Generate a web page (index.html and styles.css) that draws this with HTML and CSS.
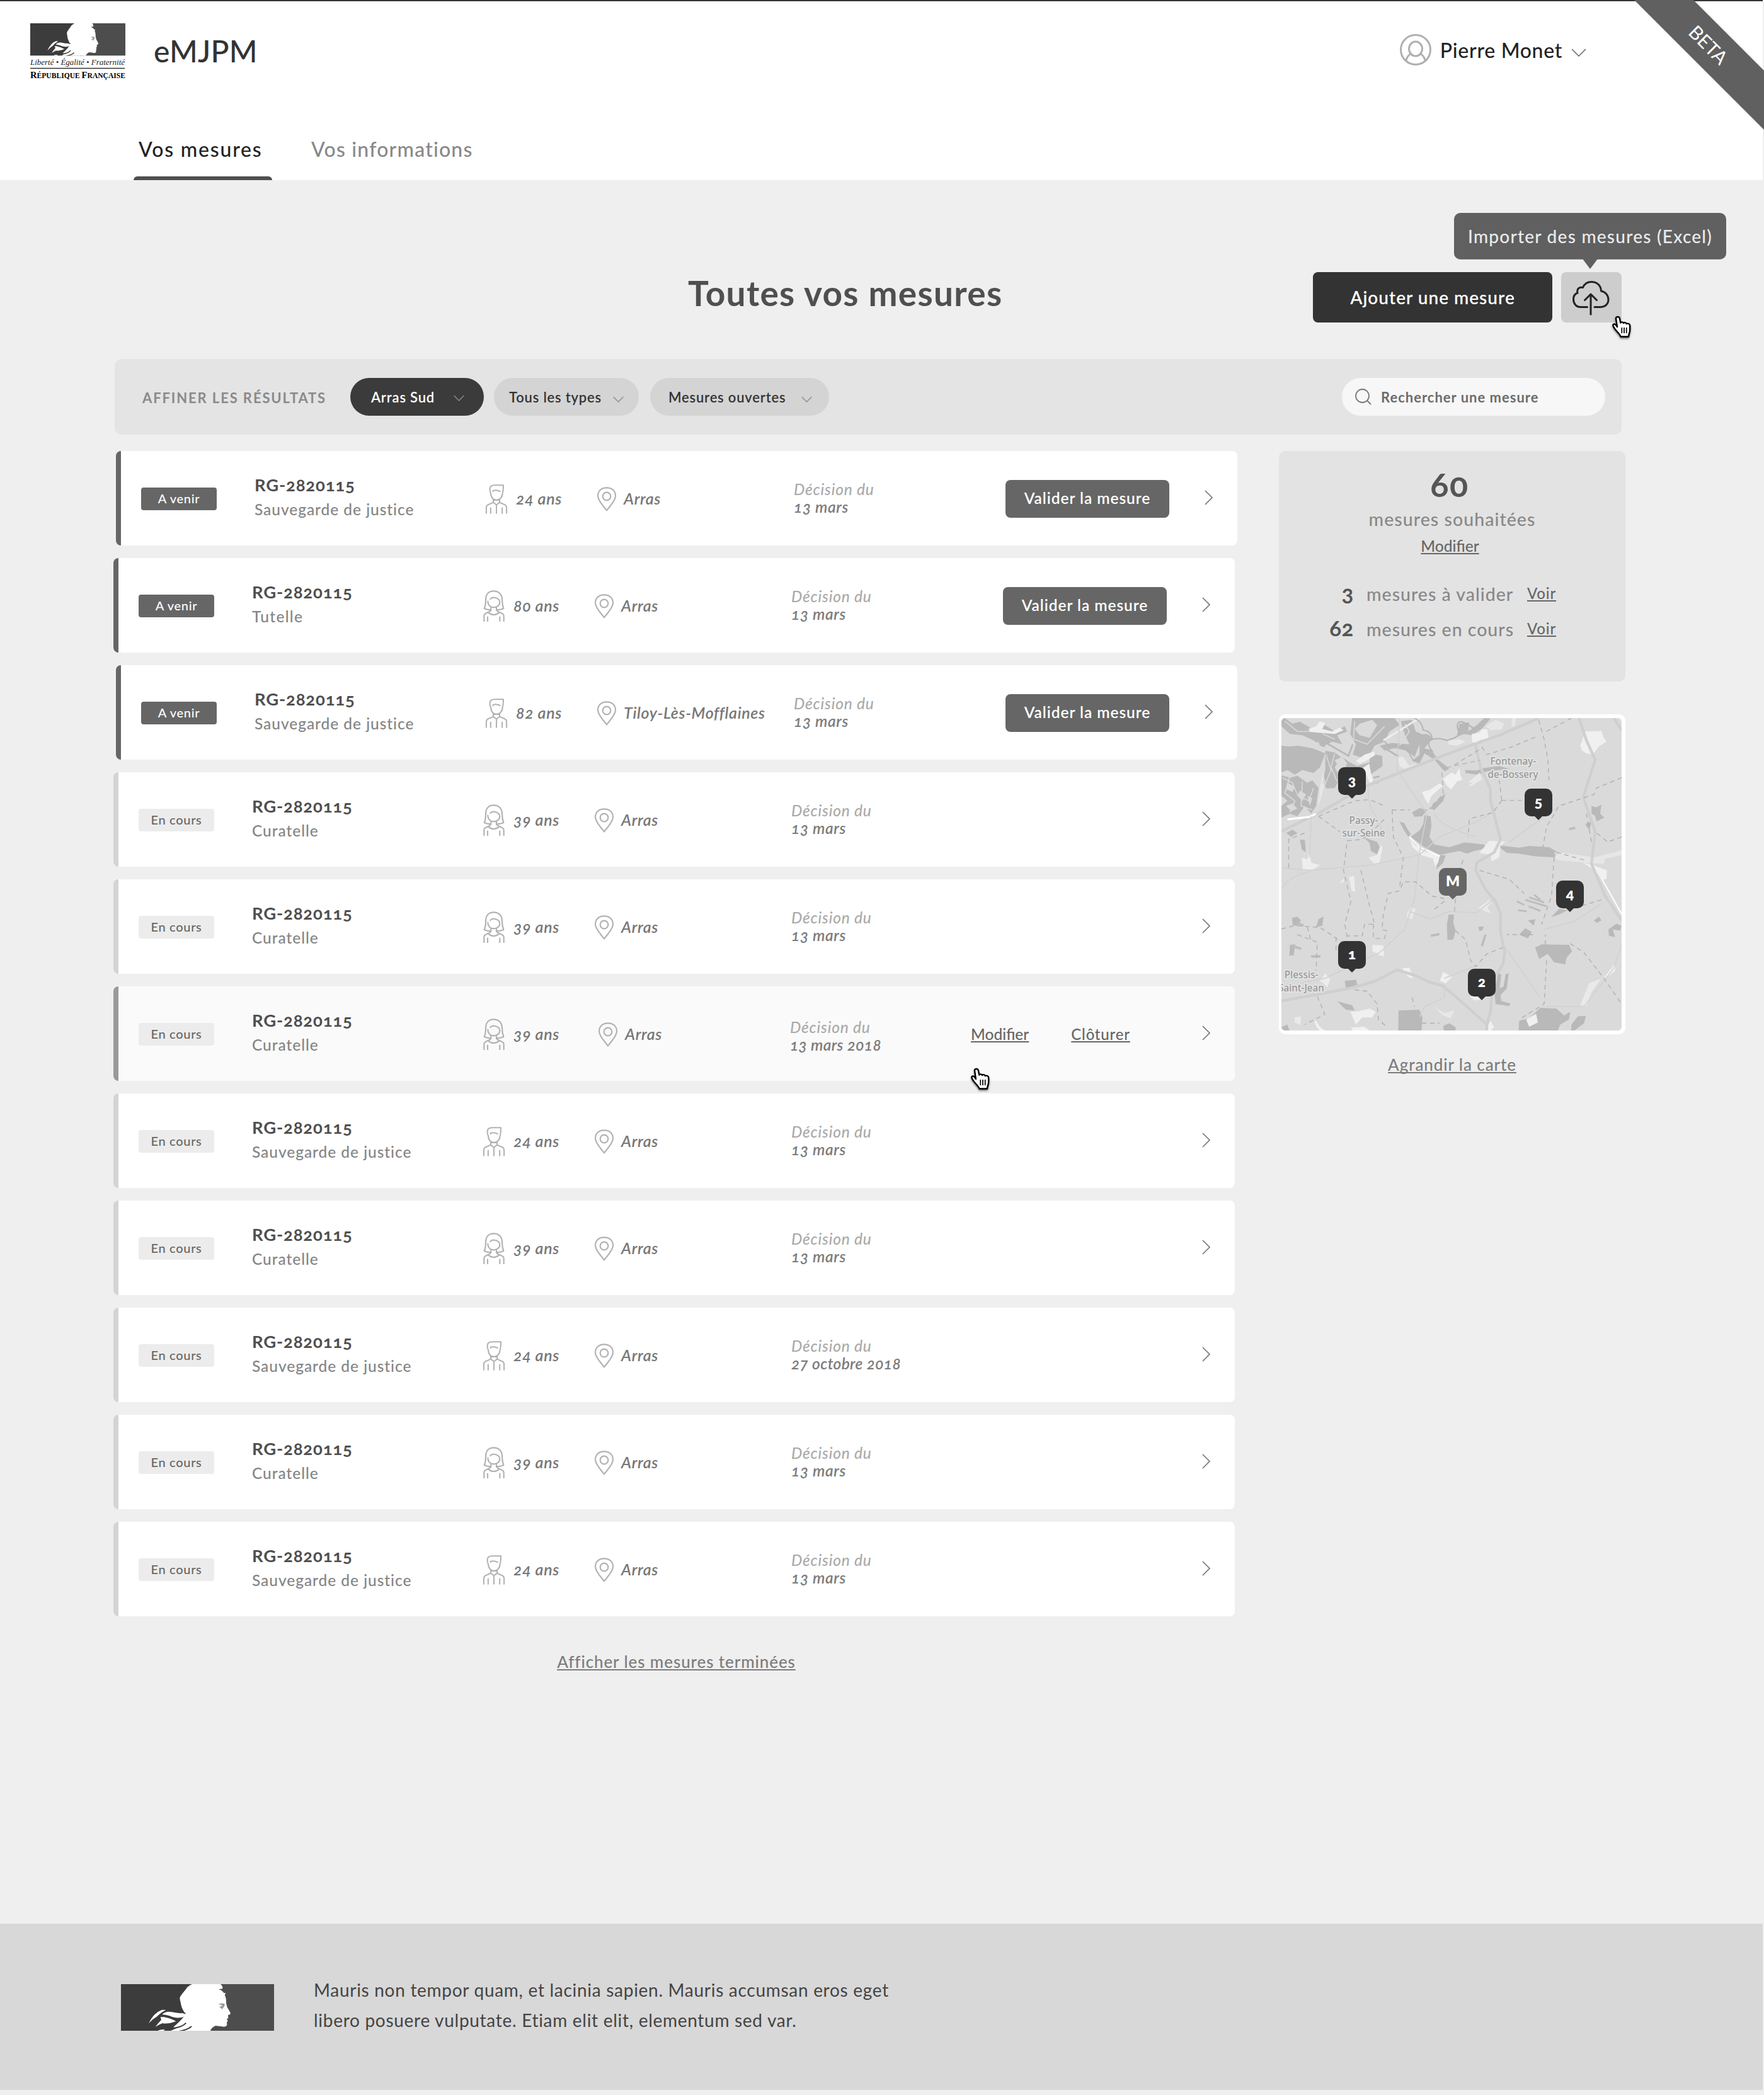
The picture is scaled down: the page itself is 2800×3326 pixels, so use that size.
FILE: index.html
```html
<!DOCTYPE html>
<html lang="fr">
<head>
<meta charset="utf-8">
<title>eMJPM</title>
<link rel="stylesheet" href="styles.css">
</head>
<body>
<svg class="defs" width="0" height="0">
  <symbol id="man" viewBox="87 81 114 150"><path d="M179 87H136Q111 87 111 106C110 116 113 124 116 130C116 150 130 162 144 162S174 150 174 130C178 118 179 105 179 87ZM127 119V115Q143 109 162 118M128 160V174L110 182Q93 187 93 200V228M160 160V174L178 182Q195 187 195 200V228M128 174L144 186L160 174M144 186V228M115 202V228M173 202V228"/></symbol>
  <symbol id="woman" viewBox="80 590 104 150"><path d="M118 684Q100 684 86 677C92 665 93 655 93 636C93 610 107 594 131 594S171 610 171 636C171 655 173 665 178 677Q164 684 144 684M115 632Q122 622 138 626C152 629 160 638 160 648C160 662 146 672 131 672C114 672 103 660 103 643M118 671V685Q112 694 100 697Q85 702 85 712V737M144 671V685Q150 694 162 697Q179 702 179 712V737M105 696Q131 718 157 696M102 718V737M160 718V737"/></symbol>
  <symbol id="pin" viewBox="621 101 96 117"><path d="M669 105C642 105 627 122 627 144C627 168 655 193 669 213C683 193 711 168 711 144C711 122 696 105 669 105Z"/><circle cx="669" cy="146" r="19"/></symbol>
  <symbol id="next" viewBox="0 0 14 24"><path d="M1 1L12 12L1 23"/></symbol>
  <symbol id="down" viewBox="0 0 24 13"><path d="M1 1L12 12L23 1"/></symbol>
  <symbol id="hand" viewBox="0 0 34 38"><path d="M9.500 2C11.500 1.600 12.600 3 13 5L14.300 11.500C15.500 9.800 18.200 10 19 12C20.500 10.500 23 11 23.600 13C25.800 12 29.200 13 29.200 16V23C29 27 27.500 28.500 27 33.500H14.500C13 28.500 7.500 25 4.500 20C2.500 17 1.500 14.500 3.300 13.600C5.300 13 7.500 15 9 18L7 5C6.700 3.300 7.800 2.300 9.500 2Z" fill="#fff" stroke="#000" stroke-width="2.400" stroke-linejoin="round"/><path d="M16.300 19V28M20 19V28M23.700 19V28" stroke="#000" stroke-width="1.700"/></symbol>
  <symbol id="marianne" viewBox="18 18 729 222" preserveAspectRatio="none">
    <path d="M18 18H420V240H18Z" fill="#3c3c3c"/><path d="M400 18H747V240H400Z" fill="#4d4d4d"/>
    <g fill="#fff">
      <path d="M357 18H492Q506 30 501 40L482 43Q500 47 508 60L517 61L512 69Q520 85 519 108L524 128Q532 140 540 156L537 163L528 165L529 181L521 185L527 192L522 200L523 214Q515 224 500 220L468 216Q448 225 444 240H255Q275 232 290 224Q272 226 268 222Q300 196 318 172L322 156Q303 125 302 104Q296 86 300 78Q304 70 325 45Q334 28 357 18Z"/>
      <path d="M150 205Q175 152 215 140L232 141Q205 155 190 172Q166 186 150 205Z"/>
      <path d="M214 163Q230 145 260 151Q300 160 326 154V170Q295 184 262 174Q236 163 214 163Z"/>
      <path d="M206 173Q212 176 220 174Q255 180 280 195Q240 210 215 204Q196 213 182 221Q198 200 210 188Z"/>
      <path d="M193 240Q205 233 228 234L220 240Z"/>
    </g>
    <path d="M272 227Q310 222 328 203M296 242Q335 236 354 219M303 150L325 158" fill="none" stroke="#3c3c3c" stroke-width="6"/>
    <path d="M480 114Q496 106 512 112L511 122L500 137L486 126L500 122Q498 114 480 114Z" fill="#9a9a9a"/>
  </symbol>
</svg>

<header class="header">
  <div class="header-top">
    <svg class="logo" width="152" height="96" viewBox="0 0 152 96">
      <use href="#marianne" width="151" height="51.500"/>
      <text class="motto" x="0" y="65.500" textLength="150" lengthAdjust="spacingAndGlyphs">Liberté • Égalité • Fraternité</text>
      <path d="M0 71.500H150" stroke="#333" stroke-width="1.300"/>
      <text class="republic" x="0" y="87" textLength="151" lengthAdjust="spacingAndGlyphs"><tspan class="cap">R</tspan>ÉPUBLIQUE <tspan class="cap">F</tspan>RANÇAISE</text>
    </svg>
    <div class="brand">eMJPM</div>
    <div class="user">
      <svg class="avatar" viewBox="0 0 50 50"><circle cx="25" cy="25" r="23.500"/><ellipse cx="25" cy="23.500" rx="10.500" ry="11.500"/><path d="M10 42C11 37 13 34 17 31.500M40 42C39 37 37 34 33 31.500"/></svg>
      <span class="user-name">Pierre Monet</span>
      <svg class="chevron chevron-user"><use href="#down"/></svg>
    </div>
  </div>
  <nav class="tabs">
    <a class="tab tab-active">Vos mesures</a>
    <a class="tab">Vos informations</a>
  </nav>
</header>
<svg class="ribbon" viewBox="0 0 206 206"><path d="M0 0H94L206 112V206Z" fill="#606060"/><text x="110" y="79" transform="rotate(45 110 79)" text-anchor="middle">BETA</text></svg>

<main class="main">
  <div class="title-row">
    <h1 class="title">Toutes vos mesures</h1>
    <div class="buttons">
      <button class="add">Ajouter une mesure</button>
      <div class="import">
        <svg width="96" height="80" viewBox="0 0 96 80"><path d="M41.500 55.500H31C23 55.500 19.500 49 19.500 43C19.500 38 22 34.500 26 33C24.500 27 28 23.500 34.500 24.500C37 18.500 42 15.500 48 15.500C57 15.500 63 21 63.500 30C70.500 31.500 75 37 75 43.500C75 50.500 70 55.500 62 55.500H53M47 67V35.500M37.500 44.500L47 35L56.500 44.500"/></svg>
        <div class="tooltip">Importer des mesures (Excel)</div>
        <svg class="cursor cursor-import"><use href="#hand"/></svg>
      </div>
    </div>
  </div>

  <div class="filters">
    <span class="filters-label">AFFINER LES RÉSULTATS</span>
    <div class="pill pill-dark">Arras Sud<svg class="chevron"><use href="#down"/></svg></div>
    <div class="pill pill-types">Tous les types<svg class="chevron"><use href="#down"/></svg></div>
    <div class="pill pill-open">Mesures ouvertes<svg class="chevron"><use href="#down"/></svg></div>
    <div class="search"><svg class="search-icon" viewBox="0 0 26 26"><circle cx="11.500" cy="11.500" r="10.500"/><path d="M19 19L25 25"/></svg>Rechercher une mesure</div>
  </div>

  <div class="content">
    <section class="list">
      <article class="row row-new">
        <span class="badge">A venir</span>
        <div class="ref"><b>RG-2820115</b><span>Sauvegarde de justice</span></div>
        <svg class="icon person"><use href="#man"/></svg><em class="fact">24 ans</em>
        <svg class="icon place"><use href="#pin"/></svg><em class="fact">Arras</em>
        <em class="date">Décision du<b>13 mars</b></em>
        <div class="action"><button class="validate">Valider la mesure</button></div>
        <svg class="next"><use href="#next"/></svg>
      </article>
      <article class="row row-new row-even">
        <span class="badge">A venir</span>
        <div class="ref"><b>RG-2820115</b><span class="short">Tutelle</span></div>
        <svg class="icon person"><use href="#woman"/></svg><em class="fact">80 ans</em>
        <svg class="icon place"><use href="#pin"/></svg><em class="fact">Arras</em>
        <em class="date">Décision du<b>13 mars</b></em>
        <div class="action"><button class="validate">Valider la mesure</button></div>
        <svg class="next"><use href="#next"/></svg>
      </article>
      <article class="row row-new">
        <span class="badge">A venir</span>
        <div class="ref"><b>RG-2820115</b><span>Sauvegarde de justice</span></div>
        <svg class="icon person"><use href="#man"/></svg><em class="fact">82 ans</em>
        <svg class="icon place"><use href="#pin"/></svg><em class="fact">Tiloy-Lès-Mofflaines</em>
        <em class="date">Décision du<b>13 mars</b></em>
        <div class="action"><button class="validate">Valider la mesure</button></div>
        <svg class="next"><use href="#next"/></svg>
      </article>
      <article class="row">
        <span class="badge">En cours</span>
        <div class="ref"><b>RG-2820115</b><span>Curatelle</span></div>
        <svg class="icon person"><use href="#woman"/></svg><em class="fact">39 ans</em>
        <svg class="icon place"><use href="#pin"/></svg><em class="fact">Arras</em>
        <em class="date">Décision du<b>13 mars</b></em>
        <div class="action"></div>
        <svg class="next"><use href="#next"/></svg>
      </article>
      <article class="row">
        <span class="badge">En cours</span>
        <div class="ref"><b>RG-2820115</b><span>Curatelle</span></div>
        <svg class="icon person"><use href="#woman"/></svg><em class="fact">39 ans</em>
        <svg class="icon place"><use href="#pin"/></svg><em class="fact">Arras</em>
        <em class="date">Décision du<b>13 mars</b></em>
        <div class="action"></div>
        <svg class="next"><use href="#next"/></svg>
      </article>
      <article class="row row-hover">
        <span class="badge">En cours</span>
        <div class="ref"><b>RG-2820115</b><span>Curatelle</span></div>
        <svg class="icon person"><use href="#woman"/></svg><em class="fact">39 ans</em>
        <svg class="icon place"><use href="#pin"/></svg><em class="fact">Arras</em>
        <em class="date">Décision du<b class="long">13 mars 2018</b></em>
        <div class="action"><a class="link edit">Modifier</a><a class="link">Clôturer</a></div>
        <svg class="next"><use href="#next"/></svg>
        <svg class="cursor cursor-row"><use href="#hand"/></svg>
      </article>
      <article class="row">
        <span class="badge">En cours</span>
        <div class="ref"><b>RG-2820115</b><span>Sauvegarde de justice</span></div>
        <svg class="icon person"><use href="#man"/></svg><em class="fact">24 ans</em>
        <svg class="icon place"><use href="#pin"/></svg><em class="fact">Arras</em>
        <em class="date">Décision du<b>13 mars</b></em>
        <div class="action"></div>
        <svg class="next"><use href="#next"/></svg>
      </article>
      <article class="row">
        <span class="badge">En cours</span>
        <div class="ref"><b>RG-2820115</b><span>Curatelle</span></div>
        <svg class="icon person"><use href="#woman"/></svg><em class="fact">39 ans</em>
        <svg class="icon place"><use href="#pin"/></svg><em class="fact">Arras</em>
        <em class="date">Décision du<b>13 mars</b></em>
        <div class="action"></div>
        <svg class="next"><use href="#next"/></svg>
      </article>
      <article class="row">
        <span class="badge">En cours</span>
        <div class="ref"><b>RG-2820115</b><span>Sauvegarde de justice</span></div>
        <svg class="icon person"><use href="#man"/></svg><em class="fact">24 ans</em>
        <svg class="icon place"><use href="#pin"/></svg><em class="fact">Arras</em>
        <em class="date">Décision du<b class="long">27 octobre 2018</b></em>
        <div class="action"></div>
        <svg class="next"><use href="#next"/></svg>
      </article>
      <article class="row">
        <span class="badge">En cours</span>
        <div class="ref"><b>RG-2820115</b><span>Curatelle</span></div>
        <svg class="icon person"><use href="#woman"/></svg><em class="fact">39 ans</em>
        <svg class="icon place"><use href="#pin"/></svg><em class="fact">Arras</em>
        <em class="date">Décision du<b>13 mars</b></em>
        <div class="action"></div>
        <svg class="next"><use href="#next"/></svg>
      </article>
      <article class="row">
        <span class="badge">En cours</span>
        <div class="ref"><b>RG-2820115</b><span>Sauvegarde de justice</span></div>
        <svg class="icon person"><use href="#man"/></svg><em class="fact">24 ans</em>
        <svg class="icon place"><use href="#pin"/></svg><em class="fact">Arras</em>
        <em class="date">Décision du<b>13 mars</b></em>
        <div class="action"></div>
        <svg class="next"><use href="#next"/></svg>
      </article>
      <a class="more more-list">Afficher les mesures terminées</a>
    </section>

    <aside class="side">
      <div class="stats">
        <b class="total">60</b>
        <span class="total-label">mesures souhaitées</span>
        <a class="link edit total-edit">Modifier</a>
        <div class="stat"><b>3</b><span>mesures à valider</span><a class="link">Voir</a></div>
        <div class="stat"><b>62</b><span>mesures en cours</span><a class="link">Voir</a></div>
      </div>
      <div class="map">
        <svg class="map-art" viewBox="86 98 1365 1215" preserveAspectRatio="none">
          <rect x="86" y="98" width="1365" height="1215" fill="#dadada"/>
          <g fill="#b9b9b9">
            <path d="M86 205Q120 212 150 205L210 215L262 235L240 290L215 312L170 300L140 318L110 300L86 310Z"/>
            <path d="M262 225L300 232L325 250L300 290L322 330L300 370L268 372L250 350L262 300Z"/>
            <path d="M330 250L360 270L390 285L440 270L440 235L490 245L492 285L440 320L420 290L370 300L330 280Z"/>
            <path d="M370 98H540L560 125L520 150L500 190L460 205L440 240L400 250L372 240L385 200L362 160Z"/>
            <path d="M86 98H100L130 120L160 112L210 140L260 125L300 150L340 130L350 150L310 165L330 200L290 190L250 210L215 185L170 165L120 160L86 130Z"/>
            <path d="M86 320L120 330L150 322L190 350L210 340L235 370L225 440L205 470L180 440L150 480L120 470L86 485V440L110 420L86 400Z"/>
            <path d="M565 110L610 105L625 150L660 165L690 180L640 200L620 250L590 225L540 215L500 225L480 205L530 195L600 200L580 160Z"/>
            <path d="M640 165Q680 150 690 180L660 215L690 225L715 260L760 295L740 305L700 260L660 235L640 275L610 265L640 240Z"/>
            <path d="M790 170L800 120L840 115L835 150L870 125L900 98L925 100L890 140L850 165L820 160Z"/>
            <path d="M823 300L870 302L900 292L960 285L1000 295L960 300L910 305L870 318L825 312Z"/>
            <path d="M660 475L685 480L688 520L680 560L700 590L760 600L820 582L900 590L905 605L860 615L830 625L800 615L720 630L660 600L605 560L640 535L655 510Z"/>
            <path d="M560 502L578 505L592 530L605 550L595 560L575 530Z"/><path d="M610 465L640 448L672 455L650 480L620 482Z"/>
            <path d="M680 450L720 410L745 390L735 420L700 455Z"/>
            <path d="M950 592L1040 602L1080 595L1160 600L1200 622L1180 640L1100 635L1040 625L990 622Z"/>
            <path d="M722 630L745 632L735 660L708 686L712 660Z"/><path d="M418 562L470 580L480 600L470 628L445 615L440 585Z"/>
            <path d="M160 570L180 572L184 620L168 610Z"/><path d="M105 545L130 532L150 545L125 560Z"/>
            <path d="M757 862H778L776 895L785 925L775 960H752L750 900Z"/>
            <path d="M128 875L150 870L165 885L150 905H132Z"/><path d="M235 880L255 870L250 905L225 912Z"/><path d="M120 980L142 978L135 1020L118 1022Z"/>
            <path d="M1104 990L1130 978L1240 980L1252 1005L1230 1030L1225 1056L1180 1048L1155 1015L1120 1035Z"/>
            <path d="M1168 872L1200 840L1235 845L1200 862Z"/><path d="M1330 440L1350 445L1370 435L1365 470L1382 485L1350 500L1345 478L1330 470Z"/><path d="M1305 510L1330 500L1322 535Z"/>
            <path d="M1040 940L1065 915L1090 930L1075 955Z"/><path d="M1075 885L1105 880L1098 905Z"/><path d="M1398 920L1430 898L1450 905L1445 925L1415 920L1425 950L1400 945Z"/><path d="M1340 885L1360 870L1370 885L1352 895Z"/>
            <path d="M876 910L898 908L892 925H880Z"/><path d="M955 1090L968 1095L962 1150L978 1140L985 1095L998 1090L990 1150L965 1175L968 1198L1005 1208L1000 1218L945 1210L940 1160Z"/>
            <path d="M556 1235L640 1232L652 1262L648 1313H555Z"/><path d="M735 1295L760 1285L785 1300V1313H738Z"/>
            <path d="M1040 1275L1080 1265L1125 1225L1190 1228L1220 1255L1245 1240L1240 1270L1205 1290L1195 1313H1038Z"/><path d="M1250 1290L1275 1258L1308 1256L1300 1285L1262 1313H1248Z"/>
            <path d="M340 1120L385 1115L390 1135L345 1150Z"/><path d="M310 1200L370 1215L380 1235L345 1232Z"/><path d="M86 1300L110 1290L118 1313H86Z"/>
          </g>
          <path d="M1030 810L1060 825M1035 845L1070 850M1065 805L1150 830M1080 795L1140 815M1100 785L1125 805M1078 830L1125 848" fill="none" stroke="#bdbdbd" stroke-width="7"/>
          <path d="M205 1025H243M150 895L175 905M130 985L165 995M905 940L890 985M1240 530L1265 525M685 945L720 938" fill="none" stroke="#bcbcbc" stroke-width="9"/>
          <g fill="#dadada"><path d="M400 120L450 105L470 125L440 175L400 165L380 140Z"/><path d="M180 180L210 195L240 190L235 215L200 205Z"/><path d="M110 350L140 365L130 385L105 375ZM160 380L185 395L170 420L150 400ZM105 440L130 430L150 450L125 460ZM190 400L210 410L200 440Z"/><path d="M300 262L330 248L350 275L340 290L315 285Z"/></g>
          <path d="M90 330L130 350L150 395L195 420L215 370M120 325L100 390L140 420L120 465M170 345L165 440L210 455M265 240L285 300L260 360M300 235L285 290L310 345M100 110L150 150L230 150L300 180M380 110L375 180L430 200L500 130M580 120L600 150L560 205" fill="none" stroke="#dadada" stroke-width="4"/>
          <path d="M240 150L275 200L355 245L372 200M200 160L260 210M500 215L560 250M455 330L480 325M450 345L475 350" fill="none" stroke="#b9b9b9" stroke-width="7"/>
          <g fill="#f0f0f0">
            <path d="M195 140L225 130L240 110L262 118L250 140L290 150L320 135L335 145L300 160L240 155L200 152Z"/>
            <path d="M385 265L420 240L458 228L462 242L430 262L400 275Z"/><path d="M415 290L438 275L445 310L455 345L440 350Z"/>
            <path d="M850 160L880 155L890 140L912 142L918 180L885 182L865 195L850 190Z"/><path d="M905 130L945 105L980 120L970 142L925 145Z" opacity=".6"/>
            <path d="M550 245L575 250L600 285L625 275L620 292L585 298L560 285Z" opacity=".7"/><path d="M755 185L800 180L825 190L790 205L755 200Z" opacity=".7"/>
            <path d="M740 330L768 310L785 318L800 292L805 322L812 338L790 345L768 375L750 362L735 335Z"/>
            <path d="M650 385L680 378L720 352L735 360L700 390L688 402L675 432L662 412Z"/>
            <path d="M835 350L880 310L892 335L850 362L835 362L855 348Z" opacity=".7"/><path d="M1010 98H1028L1022 130H1010Z" opacity=".6"/>
            <path d="M1285 205L1305 150L1370 148L1378 172L1390 190L1360 208L1335 240L1310 235L1292 225Z"/>
            <path d="M240 375L252 310L262 345L250 390L232 450Z" opacity=".6"/>
            <path d="M600 565L620 590L660 618L722 630L715 660L702 675L695 645L650 632L612 600Z"/>
            <path d="M435 640L470 630L485 592L492 600L480 660L460 665Z" opacity=".8"/><path d="M168 640L190 648L200 618L205 660L240 670L210 690H172Z" opacity=".9"/>
            <path d="M880 622L920 575L985 578L965 595L960 640L930 655L925 630Z" opacity=".9"/>
            <path d="M1180 618L1260 628L1340 640L1451 612V630L1385 645L1380 665L1320 662L1190 650Z" opacity=".55"/>
            <path d="M1295 660L1330 668L1392 690L1390 725H1370L1345 690Z"/><path d="M357 715L378 712L382 772L368 770ZM318 740L335 722L338 735Z" opacity=".8"/>
            <path d="M875 838L920 805L930 815L912 835L928 858L905 850Z" opacity=".7"/><path d="M588 860L605 832L625 840L610 882L590 875Z" opacity=".6"/>
            <path d="M450 980L495 982L498 1025L480 1020L452 1005Z" opacity=".9"/><path d="M570 1072L600 1068L615 1110L595 1105Z"/>
            <path d="M722 1120L735 1085L770 1105L745 1130Z"/><path d="M240 1120L262 1090L282 1115L270 1145L255 1130Z" opacity=".8"/>
            <path d="M362 1240L395 1238L440 1228L465 1240L450 1262L410 1262L385 1290Z"/><path d="M218 1272L228 1278Q240 1305 262 1313H240Q222 1300 218 1272Z"/><path d="M365 1302L420 1298L440 1313H372Z"/>
            <path d="M700 1222L740 1245L780 1235L765 1265L735 1255Z" opacity=".6"/><path d="M138 1262L165 1258L162 1292L140 1282Z" opacity=".7"/>
            <path d="M1068 1270L1108 1248L1115 1282L1080 1298Z"/><path d="M1378 1110L1425 1052V1080L1395 1105Z"/><path d="M1285 1215L1320 1130L1370 1110L1330 1165L1310 1220Z" opacity=".7"/><path d="M905 1313L925 1275L940 1300L925 1313Z"/><path d="M842 1182L880 1175L900 1192L860 1196Z"/>
          </g>
          <g fill="none" stroke="#cfcfcf" stroke-width="11" stroke-linejoin="round">
            <path d="M86 538L235 468L420 365L600 295L800 220L960 165L1120 98"/>
            <path d="M862 195L885 290L925 375L925 420L965 570L940 620L870 660L865 690L905 765L945 810L965 860L965 930L982 1010L975 1055L935 1120L925 1240L910 1290V1313"/>
            <path d="M1280 98L1310 185L1345 260L1297 405L1345 540L1330 665L1385 790L1451 885"/><path d="M1420 98L1451 145"/>
            <path d="M86 1198L200 1178L380 1145L460 1122L550 1077L620 1098L680 1125L735 1140L790 1185L905 1285"/>
          </g>
          <path d="M495 185L640 98" fill="none" stroke="#eee" stroke-width="7"/><path d="M110 492L200 482L225 470" fill="none" stroke="#fff" stroke-width="8"/>
          <path d="M600 560L640 600L722 635M1370 720L1451 860" fill="none" stroke="#fff" stroke-width="5"/>
          <path d="M500 190L520 210Q560 190 600 235Q620 290 650 240Q660 215 690 225Q670 200 680 185Q710 170 750 185Q790 175 800 160Q780 110 810 112Q840 125 860 140M620 98Q650 110 655 145Q690 150 690 178" fill="none" stroke="#b5b5b5" stroke-width="5"/>
          <g fill="none" stroke="#d1d1d1" stroke-width="4">
            <path d="M86 680L200 690L440 670L640 630L720 560L870 500L935 465M205 480L200 640M86 760Q120 710 200 695M435 360Q430 440 465 480L500 560M670 470L550 300L560 98M670 470L640 620L620 800L580 920L480 1010L260 1110L160 1130M700 470Q720 520 870 560M600 850L680 880L760 850L870 855L940 800M870 1060L740 1110M970 970L1120 1180M1140 920L1260 890L1370 820M1200 440L1000 580M1451 980L1420 1070L1300 1220L1150 1220M740 1140V1185L660 1220L640 1260"/>
          </g>
          <g fill="none" stroke="#b0b0b0" stroke-width="3.500" stroke-dasharray="18 14">
            <path d="M235 480L380 420L440 415L500 440M235 480L320 540M115 680V570L180 545M350 950L340 900L365 810L335 690L350 575L410 570L470 520L500 490M405 690L440 830L460 900H420L410 945H350M455 900V955H500L508 925L490 920L495 860L515 780L560 770L575 735L625 735L690 790L740 800M530 455H600M530 455L535 560L575 640L560 760M785 800L780 850M740 810L690 850"/>
            <path d="M730 310L735 395L680 450M750 290L880 262M780 280L890 215M970 418H1050M970 418L960 340M970 418L935 465L840 490L835 560M890 210L910 240L1010 210L1110 170M1118 105L1140 180L1155 260L1160 340M1451 330L1350 370L1340 395L1200 440L1150 520L1135 600M1250 98L1150 150M1180 640L1170 790L1130 900M1330 580L1310 470M1451 560L1395 580L1345 540"/>
            <path d="M785 925L825 960L845 1040L865 1065L910 1015L975 990M880 690L1000 725L1060 780M1095 940H990M1145 980V940M1150 1040L1140 1210L1040 1270M1245 975L1300 1010L1380 1110L1451 1210M86 918L140 905L240 912L300 950L345 980M190 910L205 965M150 940L230 970L225 1080M305 950V1010M1370 805L1250 840M230 1180L260 1250L180 1290M380 1155L430 1160L470 1210L475 1270L510 1300M650 1285H720M815 650L800 690M610 1185L620 1220M1190 620L1300 650"/>
          </g>
          <g class="places">
            <text x="924" y="280" textLength="184" lengthAdjust="spacingAndGlyphs">Fontenay-</text><text x="914" y="330" textLength="202" lengthAdjust="spacingAndGlyphs">de-Bossery</text>
            <text x="358" y="509" textLength="116" lengthAdjust="spacingAndGlyphs">Passy-</text><text x="330" y="559" textLength="172" lengthAdjust="spacingAndGlyphs">sur-Seine</text>
            <text x="98" y="1110" textLength="136" lengthAdjust="spacingAndGlyphs">Plessis-</text><text x="74" y="1160" textLength="183" lengthAdjust="spacingAndGlyphs">Saint-Jean</text>
          </g>
        </svg>
        <b class="marker m3">3</b><b class="marker m5">5</b><b class="marker mm">M</b><b class="marker m4">4</b><b class="marker m1">1</b><b class="marker m2">2</b>
      </div>
      <a class="more more-map">Agrandir la carte</a>
    </aside>
  </div>
</main>

<footer class="footer">
  <svg class="footer-flag"><use href="#marianne"/></svg>
  <p class="footer-text">Mauris non tempor quam, et lacinia sapien. Mauris accumsan eros eget<br>libero posuere vulputate. Etiam elit elit, elementum sed var.</p>
</footer>
</body>
</html>
```
FILE: styles.css
```css
* { box-sizing: border-box; }
body {
  margin: 0;
  width: 2800px;
  height: 3326px;
  overflow: hidden;
  background: #efefef;
  font-family: Lato, sans-serif;
  font-weight: 500;
  font-variant-numeric: oldstyle-nums;
  color: #333;
  position: relative;
}
button { border: 0; font: inherit; color: #fff; white-space: nowrap; padding: 0; }
svg { display: block; flex: none; }
.defs { position: absolute; }

/* Header */
.header {
  height: 286px;
  margin-right: 2px;
  background: #fff;
  border-top: 2px solid #333;
  display: flex;
  flex-direction: column;
  justify-content: space-between;
}
.header-top { display: flex; align-items: flex-start; padding: 35px 280px 0 48px; }
.motto { font: italic 13px "Liberation Serif", serif; fill: #222; }
.republic { font: bold 11.500px "Liberation Serif", serif; fill: #000; }
.republic .cap { font-size: 14.500px; }
.brand { margin: 14px 0 0 44px; font-size: 48px; line-height: 60px; font-weight: 500; letter-spacing: .2px; }
.user { margin: 17px 0 0 auto; display: flex; align-items: center; height: 50px; }
.avatar { width: 50px; height: 50px; fill: none; stroke: #b0b0b0; stroke-width: 3; }
.user-name { margin: 2px 14px 0 14px; font-size: 32px; line-height: 50px; letter-spacing: .7px; color: #222; }
.chevron { width: 17px; height: 10px; fill: none; stroke: #8c8c8c; stroke-width: 2; margin-top: 8px; }
.chevron-user { width: 24px; height: 13px; stroke-width: 1.500; stroke: #666; }
.tabs { display: flex; padding-left: 212px; gap: 62px; }
.tab { height: 80px; font-size: 32px; line-height: 61px; letter-spacing: 1.200px; color: #888; }
.tab-active {
  width: 220px;
  padding-left: 8px;
  letter-spacing: 1.800px;
  color: #222;
  display: flex;
  flex-direction: column;
  justify-content: space-between;
  white-space: nowrap;
}
.tab-active::after { content: ""; height: 6px; margin-left: -8px; border-radius: 6px 6px 0 0; background: #4f4f4f; }
.ribbon { position: absolute; top: 0; right: 0; width: 206px; height: 206px; }
.ribbon text { font-size: 30px; font-weight: 400; fill: #fff; }

/* Title row */
.main { height: 2768px; padding: 146px 226px 0 180px; }
.title-row { display: flex; align-items: flex-start; padding-left: 912px; }
.title { margin: 0; font-size: 55px; line-height: 66px; font-weight: 700; letter-spacing: 1.300px; color: #4f4f4f; }
.buttons { margin-left: auto; display: flex; gap: 14px; }
.add { width: 380px; height: 80px; border-radius: 8px; background: #333; font-size: 28px; line-height: 79px; font-weight: 600; letter-spacing: 1px; }
.import { position: relative; width: 96px; height: 80px; border-radius: 8px; background: #cdcdcd; }
.import > svg:first-child { fill: none; stroke: #222; stroke-width: 3; stroke-linecap: round; stroke-linejoin: round; }
.tooltip {
  position: absolute;
  left: -170px;
  top: -94px;
  width: 432px;
  height: 74px;
  border-radius: 10px;
  border-bottom: 1px solid #7b7b7b;
  background: #606060;
  color: #ebebeb;
  font-size: 28px;
  line-height: 75px;
  letter-spacing: 1.250px;
  text-align: center;
  white-space: nowrap;
}
.tooltip::after {
  content: "";
  position: absolute;
  left: 204px;
  top: 73px;
  border: 12px solid transparent;
  border-top: 16px solid #606060;
  border-bottom: 0;
}
.cursor { position: absolute; width: 34px; height: 38px; filter: drop-shadow(0 2px 1.500px rgba(0, 0, 0, .5)); }
.cursor-import { left: 80px; top: 69px; }

/* Filters */
.filters {
  margin: 58px 0 26px 2px;
  height: 120px;
  padding: 0 26px 0 44px;
  border-radius: 10px;
  background: #e4e4e4;
  display: flex;
  align-items: center;
  font-size: 22px;
}
.filters-label { width: 330px; font-weight: 700; letter-spacing: 1.880px; color: #8a8a8a; padding-top: 3px; }
.pill {
  height: 60px;
  border-radius: 30px;
  background: #d4d4d4;
  display: flex;
  align-items: center;
  justify-content: space-between;
  font-weight: 600;
  letter-spacing: .8px;
  color: #333;
}
.pill-dark { width: 212px; padding: 0 31px 0 33px; background: #3b3b3b; color: #fff; }
.pill-dark .chevron { margin-top: 4px; }
.pill-types { width: 230px; padding: 0 24px; margin: 0 18px 0 16px; }
.pill-open { width: 284px; padding: 0 27px 0 29px; }
.search {
  margin-left: auto;
  width: 418px;
  height: 60px;
  border-radius: 30px;
  padding-left: 21px;
  background: #f7f7f7;
  display: flex;
  align-items: center;
  gap: 15px;
  font-weight: 700;
  letter-spacing: 1px;
  color: #6c6c6c;
}
.search-icon { width: 26px; height: 26px; fill: none; stroke: #777; stroke-width: 1.800; }

/* Measures list */
.content { display: flex; align-items: flex-start; gap: 66px; margin-right: -6px; }
.list { width: 1784px; display: flex; flex-direction: column; gap: 20px; }
.row {
  position: relative;
  width: 1780px;
  height: 150px;
  padding-left: 32px;
  border-left: 8px solid #d4d4d4;
  border-radius: 8px;
  background: #fff;
  display: grid;
  grid-template-columns: 180px 366px 49px 129px 42px 270px 336px 316px 14px;
  align-items: center;
}
.row-new { margin-left: 4px; border-left-color: #666; }
.row-even { margin-left: 0; }
.row-hover { border-left-color: #999; background: #fafafa; }
.badge {
  width: 120px;
  height: 36px;
  margin-top: 2px;
  border-radius: 4px;
  background: #ececec;
  color: #666;
  font-size: 20px;
  line-height: 35px;
  letter-spacing: .7px;
  text-align: center;
}
.row-new .badge { background: #666; color: #fff; }
.ref { display: flex; flex-direction: column; line-height: 39px; padding-bottom: 4px; }
.ref b { font-size: 27.500px; letter-spacing: .8px; color: #4f4f4f; }
.ref span { font-size: 24.500px; letter-spacing: .95px; color: #858585; }
.ref .short { letter-spacing: 1.300px; }
.icon { fill: none; stroke: #b2b2b2; stroke-width: 6.500; stroke-linejoin: round; stroke-linecap: round; }
.person { width: 36px; height: 50px; margin-top: 2px; }
.place { width: 32px; height: 39px; margin-top: 3px; margin-left: -1px; }
.fact { font-size: 25px; line-height: 30px; font-weight: 600; letter-spacing: .65px; color: #777; white-space: nowrap; padding-bottom: 1px; }
.date { font-size: 24.500px; line-height: 28px; letter-spacing: .8px; color: #aaa; }
.date b { display: block; font-weight: 600; letter-spacing: .65px; color: #7c7c7c; }
.date .long { letter-spacing: .35px; }
.row-hover .date { padding-top: 8px; margin-left: -2px; }
.row-hover .place { margin-left: 5px; }
.row-hover .place + .fact { padding-left: 6px; }
.validate { width: 260px; height: 60px; margin-top: 2px; border-radius: 8px; background: #666; font-size: 24.500px; font-weight: 600; line-height: 56px; letter-spacing: .95px; padding-bottom: 3px; }
.next { width: 14px; height: 24px; margin-top: -2px; fill: none; stroke: #777; stroke-width: 1.700; }
.link { font-size: 24px; color: #666; letter-spacing: .8px; text-decoration: underline 2px; text-underline-offset: 2px; text-decoration-skip-ink: none; }
.edit { font-size: 24.500px; letter-spacing: 0; }
.row-hover .action { display: flex; gap: 67px; margin-left: -51px; }
.cursor-row { left: 1352px; top: 129px; }
.more { font-size: 26px; line-height: 40px; letter-spacing: .9px; color: #7c7c7c; text-align: center; text-decoration: underline 2px; text-underline-offset: 2px; text-decoration-skip-ink: none; }
.more-list { margin-top: 32px; padding-left: 3px; }

/* Side column */
.side { width: 550px; display: flex; flex-direction: column; }
.stats {
  height: 366px;
  padding-top: 23px;
  border-radius: 10px;
  background: #e3e3e3;
  display: flex;
  flex-direction: column;
  align-items: center;
}
.total { font-size: 54px; line-height: 60px; letter-spacing: 1.500px; color: #555; margin-right: 8px; }
.total-label { margin-top: 7px; font-size: 28.500px; line-height: 36px; letter-spacing: 1.050px; color: #888; }
.total-edit { margin: 10px 7px 33px 0; line-height: 30px; }
.stat {
  align-self: stretch;
  height: 56px;
  display: grid;
  grid-template-columns: 119px 20px 255px 1fr;
  align-items: start;
}
.stat b { font-size: 35px; line-height: 50px; letter-spacing: .5px; color: #555; text-align: right; }
.stat span { grid-column: 3; font-size: 28.500px; line-height: 56px; letter-spacing: 1px; color: #888; }
.stat .link { line-height: 53px; }
.map {
  position: relative;
  width: 550px;
  height: 508px;
  margin-top: 52px;
  padding: 6px 6px 6px 4px;
  border-radius: 10px;
  background: #fff;
}
.map-art { width: 540px; height: 496px; border-radius: 6px; }
.places text { font: 500 40px "Noto Sans", sans-serif; fill: #989898; stroke: #e4e4e4; stroke-width: 8; paint-order: stroke; }
.marker {
  position: absolute;
  width: 44px;
  height: 44px;
  border-radius: 10px;
  background: #333;
  color: #fff;
  font-size: 23px;
  font-weight: 800;
  line-height: 40px;
  text-align: center;
}
.marker::after {
  content: "";
  position: absolute;
  left: 15px;
  top: 43px;
  border: 7px solid transparent;
  border-top-color: #333;
  border-bottom: 0;
}
.m3 { left: 94px; top: 84px; }
.m5 { left: 390px; top: 118px; }
.mm { left: 254px; top: 244px; background: #666; }
.mm::after { border-top-color: #666; }
.m4 { left: 440px; top: 264px; }
.m1 { left: 94px; top: 360px; }
.m2 { left: 300px; top: 404px; }
.more-map { margin-top: 28px; }

/* Footer */
.footer { margin-right: 2px; height: 264px; padding: 96px 0 0 192px; background: #d8d8d8; display: flex; align-items: flex-start; gap: 63px; }
.footer-flag { width: 243px; height: 74px; }
.footer-text { margin: -15px 0 0; font-size: 28px; line-height: 48px; font-weight: 400; letter-spacing: .71px; color: #444; }
```
